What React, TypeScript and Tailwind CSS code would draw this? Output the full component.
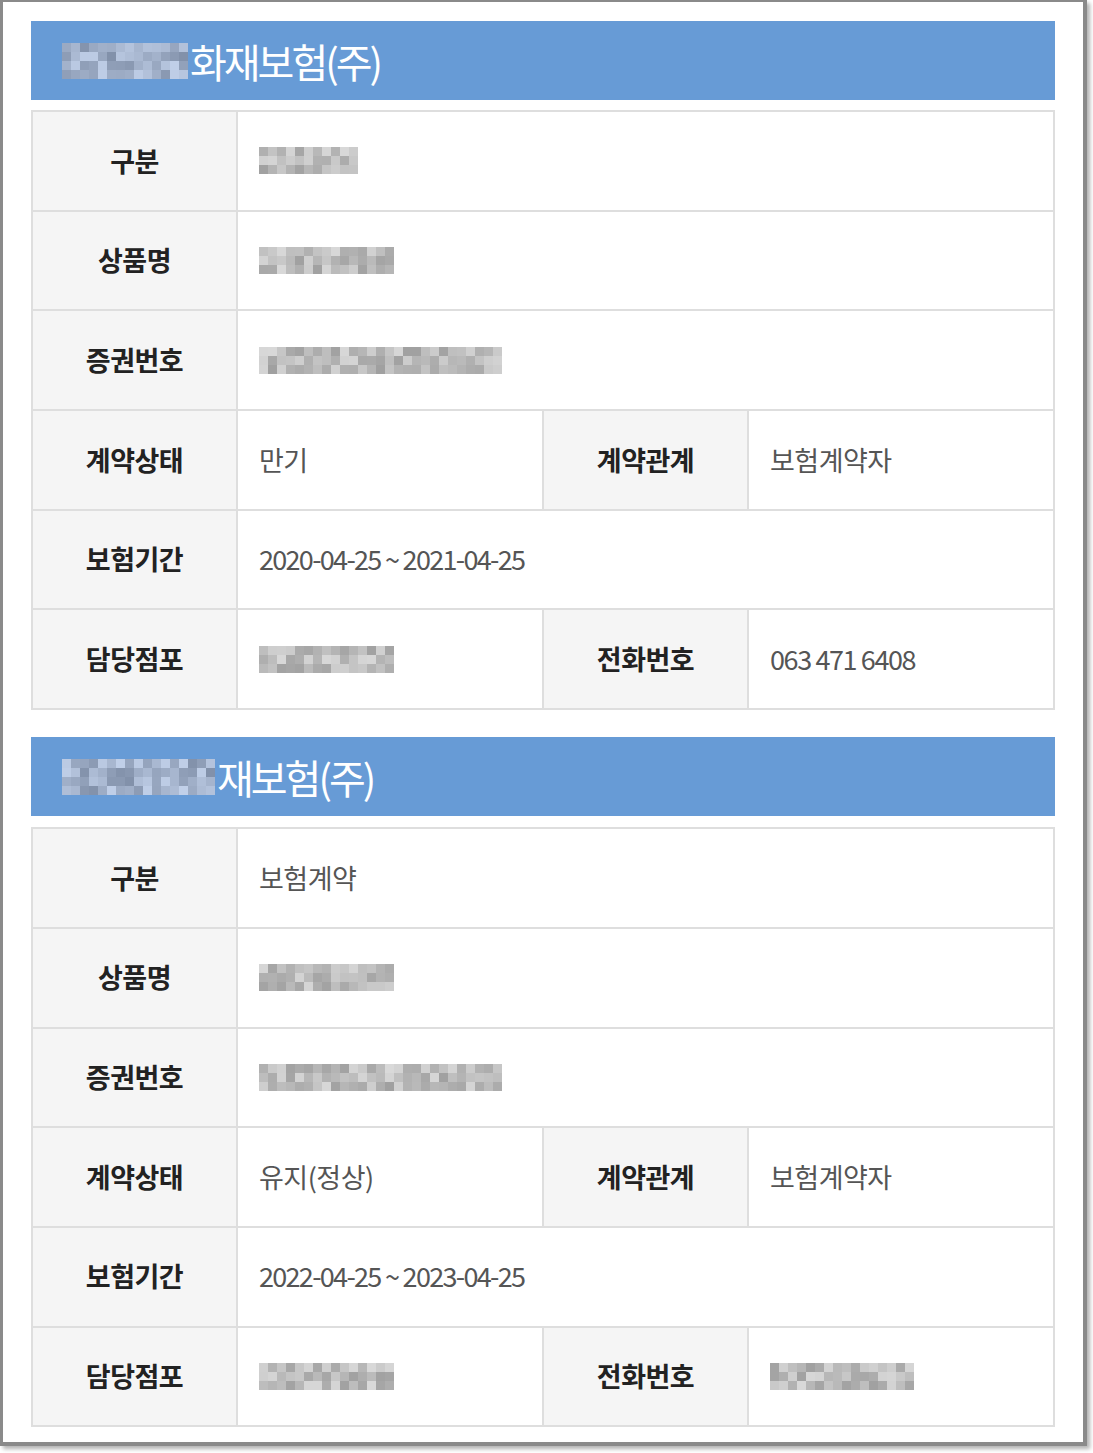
import React from "react";

const font = { fontFamily: '"Noto Sans CJK KR", "Noto Sans", sans-serif' };

// deterministic pixel mosaic standing in for the blurred parts of the screenshot
function Mosaic({
  cols,
  rows,
  cell,
  seed,
  light,
  tone,
}: {
  cols: number;
  rows: number;
  cell: number;
  seed: number;
  light: number;
  tone: "gray" | "blue";
}) {
  const cells = [];
  for (let r = 0; r < rows; r++) {
    for (let c = 0; c < cols; c++) {
      const n = Math.abs(Math.sin((r + 1) * 12.9898 + (c + 1) * 78.233 + seed) * 43758.5453) % 1;
      const v = Math.round(light + n * (255 - light) * 0.6);
      const bg =
        tone === "gray"
          ? `rgb(${v},${v},${v})`
          : `rgb(${Math.min(255, v - 20)},${Math.min(255, v - 5)},${Math.min(255, v + 20)})`;
      cells.push(<div key={`${r}-${c}`} style={{ width: cell, height: cell, background: bg }} />);
    }
  }
  return (
    <div className="grid" style={{ gridTemplateColumns: `repeat(${cols}, ${cell}px)` }}>
      {cells}
    </div>
  );
}

type Cell = { label: string; value: React.ReactNode };
type Row = Cell[];

function Label({ children }: { children: React.ReactNode }) {
  return (
    <div className="w-[205px] shrink-0 h-full flex items-center justify-center bg-[#f5f5f5] border-r-2 border-[#dedede] text-[27px] font-bold text-[#222] tracking-[-0.5px]">
      {children}
    </div>
  );
}

function Value({ children }: { children: React.ReactNode }) {
  return (
    <div className="flex-1 h-full flex items-center pl-[21px] text-[27px] text-[#555] tracking-[-0.5px] border-r-2 border-[#dedede]">
      {children}
    </div>
  );
}

function Table({ rows }: { rows: Row[] }) {
  return (
    <div className="border-t-2 border-l-2 border-[#dedede]">
      {rows.map((row, i) => (
        <div key={i} className="h-[99.7px] flex border-b-2 border-[#dedede]">
          {row.map((cell, j) => (
            <React.Fragment key={j}>
              <Label>{cell.label}</Label>
              <Value>{cell.value}</Value>
            </React.Fragment>
          ))}
        </div>
      ))}
    </div>
  );
}

function Header({ blurWidth, seed, title }: { blurWidth: number; seed: number; title: string }) {
  return (
    <div className="h-[79px] bg-[#679bd6] flex items-center pl-[31px]">
      <Mosaic cols={Math.round(blurWidth / 9)} rows={4} cell={9} seed={seed} light={150} tone="blue" />
      <span className="text-[40px] text-white tracking-[-3px] leading-none ml-[2px]">{title}</span>
    </div>
  );
}

const blur = (w: number, seed: number) => (
  <Mosaic cols={Math.round(w / 9)} rows={3} cell={9} seed={seed} light={160} tone="gray" />
);

const date = (s: string) => <span className="tracking-[-1.7px]">{s}</span>;

export default function App() {
  const first: Row[] = [
    [{ label: "구분", value: blur(100, 1) }],
    [{ label: "상품명", value: blur(135, 2) }],
    [{ label: "증권번호", value: blur(243, 3) }],
    [
      { label: "계약상태", value: "만기" },
      { label: "계약관계", value: "보험계약자" },
    ],
    [{ label: "보험기간", value: date("2020-04-25 ~ 2021-04-25") }],
    [
      { label: "담당점포", value: blur(135, 4) },
      { label: "전화번호", value: <span className="tracking-[-1.4px]">063 471 6408</span> },
    ],
  ];
  const second: Row[] = [
    [{ label: "구분", value: "보험계약" }],
    [{ label: "상품명", value: blur(133, 5) }],
    [{ label: "증권번호", value: blur(240, 6) }],
    [
      { label: "계약상태", value: "유지(정상)" },
      { label: "계약관계", value: "보험계약자" },
    ],
    [{ label: "보험기간", value: date("2022-04-25 ~ 2023-04-25") }],
    [
      { label: "담당점포", value: blur(138, 7) },
      { label: "전화번호", value: blur(148, 8) },
    ],
  ];

  return (
    <div className="w-[1093px] h-[1453px] bg-white" style={font}>
      <div className="w-[1087px] h-[1446px] bg-white border-l-[3px] border-t-[2px] border-r-[4px] border-b-[4px] border-[#8a8a8a] shadow-[3px_3px_4px_rgba(0,0,0,0.3)] pl-[28px] pr-[28px] pt-[19px]">
        <Header blurWidth={126} seed={11} title="화재보험(주)" />
        <div className="mt-[10px]">
          <Table rows={first} />
        </div>
        <div className="mt-[27px]">
          <Header blurWidth={152} seed={12} title="재보험(주)" />
        </div>
        <div className="mt-[11px]">
          <Table rows={second} />
        </div>
      </div>
    </div>
  );
}
